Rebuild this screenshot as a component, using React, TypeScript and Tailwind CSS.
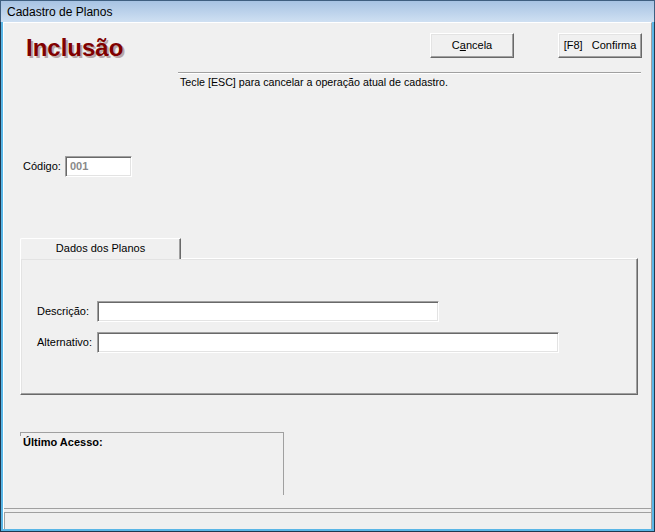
import React from "react";

const field =
  "bg-white border border-t-[#a0a0a0] border-l-[#a0a0a0] border-b-white border-r-white shadow-[inset_1px_1px_0_#696969,inset_-1px_-1px_0_#e3e3e3]";
const btn =
  "h-[25px] w-[84px] bg-[#f0f0f0] border border-t-white border-l-white border-b-[#696969] border-r-[#696969] shadow-[inset_-1px_-1px_0_#a0a0a0,inset_1px_1px_0_#e3e3e3] text-[11px] text-black flex items-center justify-center";

export default function App() {
  return (
    <div className="w-[655px] h-[532px] flex flex-col bg-[#f0f0f0] font-['Liberation_Sans',Arial,sans-serif] text-black overflow-hidden">
      {/* Title bar */}
      <div className="h-[22px] shrink-0 bg-gradient-to-b from-[#a7c3e3] to-[#cfe0f2] border-t border-l border-r border-[#3f5f80] flex items-center pl-[6px] text-[12px] text-black">
        Cadastro de Planos
      </div>
      {/* Frame */}
      <div className="flex-1 flex border-l border-r border-b border-[#20384f] bg-[#5ab6e6]">
        <div className="flex-1 m-[0_2px_2px_2px] bg-[#f0f0f0] flex flex-col border-l border-t border-white border-r border-r-[#a0a0a0]">
          {/* Header */}
          <div className="flex items-start pt-[10px] pr-[9px]">
            <div className="ml-[22px] mt-[1px] text-[24px] leading-[28px] font-bold text-[#800000] [text-shadow:2px_2px_0_#b8a8a8]">
              Inclusão
            </div>
            <div className="flex-1" />
            <button className={btn}>
              C<span className="underline">a</span>ncela
            </button>
            <button className={btn + " ml-[44px]"}>[F8]&nbsp;&nbsp;&nbsp;Confirma</button>
          </div>
          {/* Separator */}
          <div className="ml-[174px] mr-[10px] mt-[10px] h-[2px] border-t border-[#a0a0a0] border-b border-b-white" />
          <div className="ml-[176px] mt-[2px] text-[10.7px] leading-[13px]">
            Tecle [ESC] para cancelar a operação atual de cadastro.
          </div>
          {/* Código */}
          <div className="flex items-center mt-[67px] ml-[19px]">
            <span className="text-[11px] w-[42px]">Código:</span>
            <div className={field + " w-[67px] h-[21px] flex items-center pl-[4px] text-[11px] font-bold text-[#8a8a8a]"}>
              001
            </div>
          </div>
          {/* Tabs */}
          <div className="ml-[16px] mt-[61px] w-[618px] flex flex-col">
            <div className="flex">
              <div className="relative z-10 w-[161px] h-[21px] bg-[#f0f0f0] border-l border-t border-white border-r border-r-[#696969] shadow-[inset_-1px_0_0_#a0a0a0] rounded-tl-[2px] flex items-start justify-center pt-[1px] text-[11px] -mb-[1px]">
                Dados dos Planos
              </div>
            </div>
            <div className="h-[137px] border border-t-white border-l-white border-b-[#696969] border-r-[#696969] shadow-[inset_-1px_-1px_0_#a0a0a0,inset_1px_1px_0_#e3e3e3] flex flex-col">
              <div className="flex items-center mt-[42px] ml-[16px]">
                <span className="text-[11px] w-[60px]">Descrição:</span>
                <div className={field + " w-[342px] h-[21px]"} />
              </div>
              <div className="flex items-center mt-[10px] ml-[16px]">
                <span className="text-[11px] w-[60px]">Alternativo:</span>
                <div className={field + " w-[462px] h-[21px]"} />
              </div>
            </div>
          </div>
          {/* Último acesso */}
          <div className="ml-[16px] mt-[37px] w-[264px] h-[63px] border-t border-r border-[#a0a0a0] relative">
            <div className="absolute left-0 top-0 w-px h-[3px] bg-[#a0a0a0]" />
            <div className="pl-[3px] pt-[3px] text-[11px] font-bold leading-[13px]">Último Acesso:</div>
          </div>
          <div className="flex-1" />
          {/* Status bar */}
          <div className="h-[1px] bg-[#a0a0a0] mr-[-1px]" />
          <div className="h-[3px]" />
          <div className="h-[17px] border-t border-l border-[#a0a0a0] bg-[#f0f0f0]" />
        </div>
      </div>
    </div>
  );
}
